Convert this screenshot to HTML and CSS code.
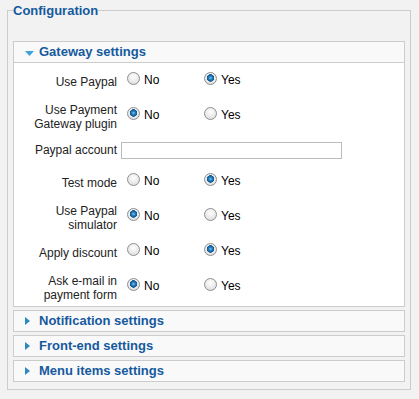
FILE: index.html
```html
<!DOCTYPE html>
<html>
<head>
    <title>Configuration</title>
    <link rel="stylesheet" href="styles.css">
</head>
<body>
    <fieldset class="config">
        <legend>Configuration</legend>

        <div class="pane open">
            <h3 class="pane-title">
                <svg class="arrow" width="9" height="5" viewBox="0 0 9 5"><polygon points="0,0 9,0 4.5,5" fill="#3ea3da"/></svg>
                Gateway settings
            </h3>
            <div class="pane-body">
                <div class="param">
                    <label class="param-label">Use Paypal</label>
                    <div class="param-value">
                        <label class="option"><input type="radio" name="usePaypal"><span>No</span></label>
                        <label class="option"><input type="radio" name="usePaypal" checked><span>Yes</span></label>
                    </div>
                </div>
                <div class="param">
                    <label class="param-label">Use Payment Gateway plugin</label>
                    <div class="param-value">
                        <label class="option"><input type="radio" name="useGateway" checked><span>No</span></label>
                        <label class="option"><input type="radio" name="useGateway"><span>Yes</span></label>
                    </div>
                </div>
                <div class="param param-text">
                    <label class="param-label" for="paypalAccount">Paypal account</label>
                    <input type="text" id="paypalAccount" class="text-field">
                </div>
                <div class="param">
                    <label class="param-label">Test mode</label>
                    <div class="param-value">
                        <label class="option"><input type="radio" name="testMode"><span>No</span></label>
                        <label class="option"><input type="radio" name="testMode" checked><span>Yes</span></label>
                    </div>
                </div>
                <div class="param">
                    <label class="param-label">Use Paypal simulator</label>
                    <div class="param-value">
                        <label class="option"><input type="radio" name="simulator" checked><span>No</span></label>
                        <label class="option"><input type="radio" name="simulator"><span>Yes</span></label>
                    </div>
                </div>
                <div class="param">
                    <label class="param-label">Apply discount</label>
                    <div class="param-value">
                        <label class="option"><input type="radio" name="discount"><span>No</span></label>
                        <label class="option"><input type="radio" name="discount" checked><span>Yes</span></label>
                    </div>
                </div>
                <div class="param">
                    <label class="param-label">Ask e-mail in payment form</label>
                    <div class="param-value">
                        <label class="option"><input type="radio" name="askEmail" checked><span>No</span></label>
                        <label class="option"><input type="radio" name="askEmail"><span>Yes</span></label>
                    </div>
                </div>
            </div>
        </div>

        <div class="pane">
            <h3 class="pane-title">
                <svg class="arrow" width="9" height="8" viewBox="0 0 9 8"><polygon points="0,0 5,4 0,8" fill="#2a88c2"/></svg>
                Notification settings
            </h3>
        </div>
        <div class="pane">
            <h3 class="pane-title">
                <svg class="arrow" width="9" height="8" viewBox="0 0 9 8"><polygon points="0,0 5,4 0,8" fill="#2a88c2"/></svg>
                Front-end settings
            </h3>
        </div>
        <div class="pane">
            <h3 class="pane-title">
                <svg class="arrow" width="9" height="8" viewBox="0 0 9 8"><polygon points="0,0 5,4 0,8" fill="#2a88c2"/></svg>
                Menu items settings
            </h3>
        </div>
    </fieldset>
</body>
</html>
```

FILE: styles.css
```css
body {
    margin: 0;
    background-color: #f2f2f2;
    font-family: "Liberation Sans", Arial, sans-serif;
    font-size: 12px;
    color: #222;
}

.config {
    margin: 3px 8px 0 7px;
    padding: 23px 5px 4px;
    border: 1px solid #ccc;
    min-width: 0;
}

.config legend {
    padding: 0;
    font-size: 13px;
    line-height: 15px;
    font-weight: bold;
    color: #155a9e;
}

.pane {
    border: 1px solid #ccc;
    margin-bottom: 3px;
    background-color: #fff;
}

.pane-title {
    margin: 0;
    height: 20px;
    display: flex;
    align-items: center;
    padding-left: 11px;
    background-color: #f9f9f9;
    font-size: 13px;
    line-height: 20px;
    font-weight: bold;
    color: #155a9e;
}

.pane.open .pane-title {
    border-bottom: 1px solid #ccc;
}

.arrow {
    flex: none;
    margin-right: 5px;
}

.pane.open .arrow {
    margin-top: 2px;
}

.pane-body {
    display: flex;
    flex-direction: column;
    gap: 11px;
    padding: 9px 0 4px;
}

.param {
    display: flex;
    align-items: center;
    gap: 4px;
    min-height: 20px;
}

.param-label {
    flex: none;
    width: 103px;
    text-align: right;
    line-height: 14px;
}

.param-value {
    display: flex;
    height: 20px;
}

.option {
    display: flex;
    align-items: flex-start;
    width: 77px;
    color: #000;
}

.option span {
    line-height: 14px;
    margin-top: 1px;
}

.option input {
    appearance: none;
    flex: none;
    width: 13px;
    height: 13px;
    margin: 0 4px 0 6px;
    border: 1px solid #8e8e8e;
    border-radius: 50%;
    background: radial-gradient(circle at 50% 35%, #fff, #d8d8d8);
}

.option input:checked {
    background:
        radial-gradient(circle at 50% 45%, #8fd0f4 0, #2a82c4 1.5px, #0e5790 3.5px, transparent 4px),
        radial-gradient(circle at 50% 35%, #fff, #d8d8d8);
}

.param-text {
    align-items: flex-start;
}

.param-text .param-label {
    padding-top: 1px;
}

.text-field {
    box-sizing: border-box;
    width: 221px;
    height: 17px;
    margin: 0;
    padding: 0 2px;
    border: 1px solid #bbb;
    font: inherit;
}
```
